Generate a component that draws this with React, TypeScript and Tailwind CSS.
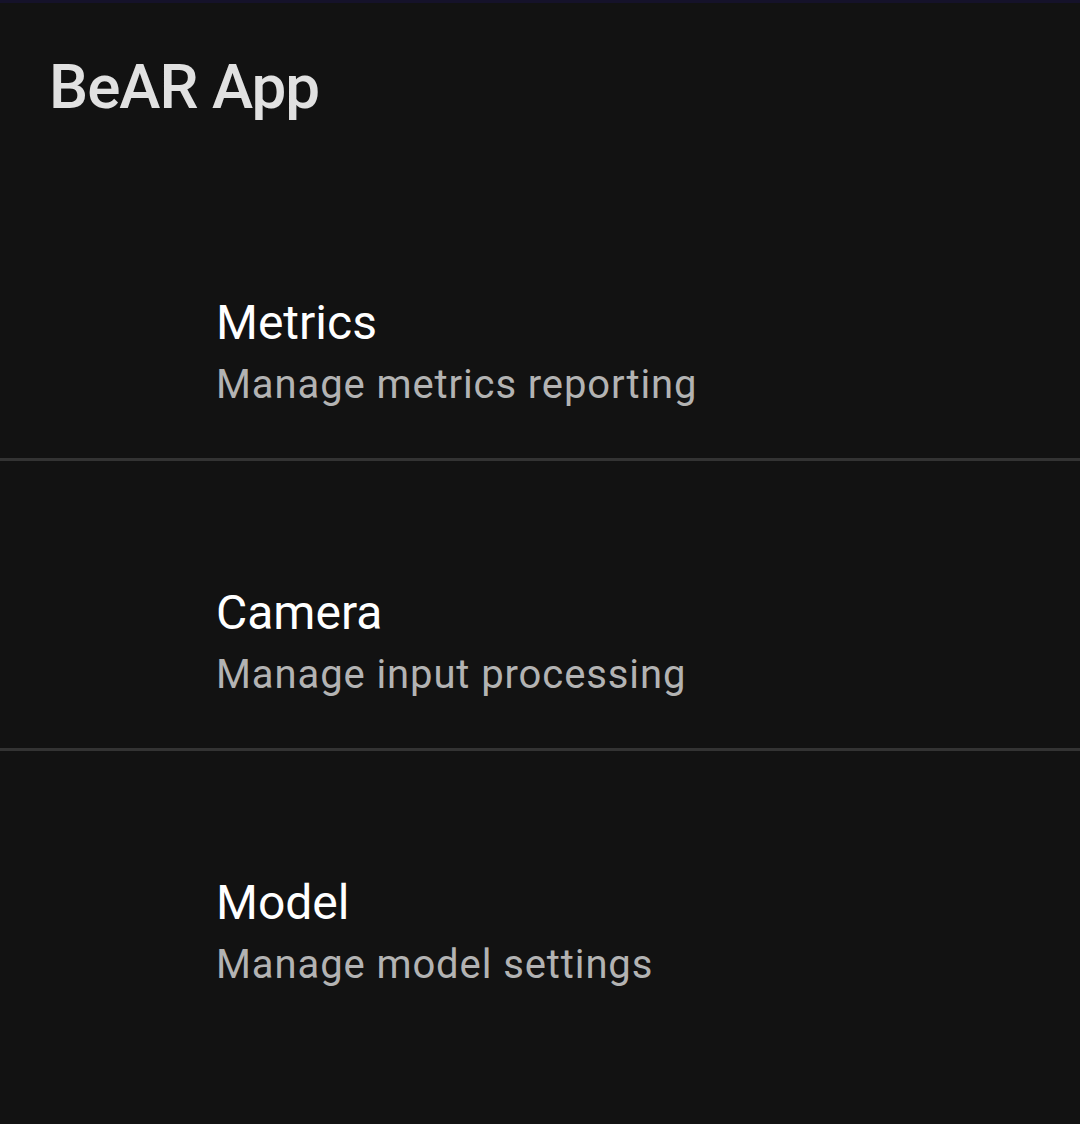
import React from "react";

const items = [
  { title: "Metrics", sub: "Manage metrics reporting" },
  { title: "Camera", sub: "Manage input processing" },
  { title: "Model", sub: "Manage model settings" },
];

export default function App() {
  return (
    <div
      className="w-[1080px] h-[1124px] bg-[#121212] overflow-hidden"
      style={{ fontFamily: "Roboto, 'Noto Sans', sans-serif" }}
    >
      <div className="h-[3px] bg-[#15122a]" />
      <div className="h-[168px] pl-[49px] pt-[48px]">
        <h1 className="text-[62px] leading-[72px] font-medium tracking-[-1px] text-[#e1e1e1]">BeAR App</h1>
      </div>
      {items.map((it, i) => (
        <div
          key={it.title}
          className={
            "pl-[216px] pt-[124px] pb-[49px] " +
            (i < items.length - 1 ? "border-b-[3px] border-[#333333]" : "")
          }
        >
          <div className="text-[48px] leading-[56px] text-white">{it.title}</div>
          <div className="mt-[10px] text-[40px] leading-[48px] tracking-[0.9px] text-[#b3b3b3]">{it.sub}</div>
        </div>
      ))}
    </div>
  );
}
